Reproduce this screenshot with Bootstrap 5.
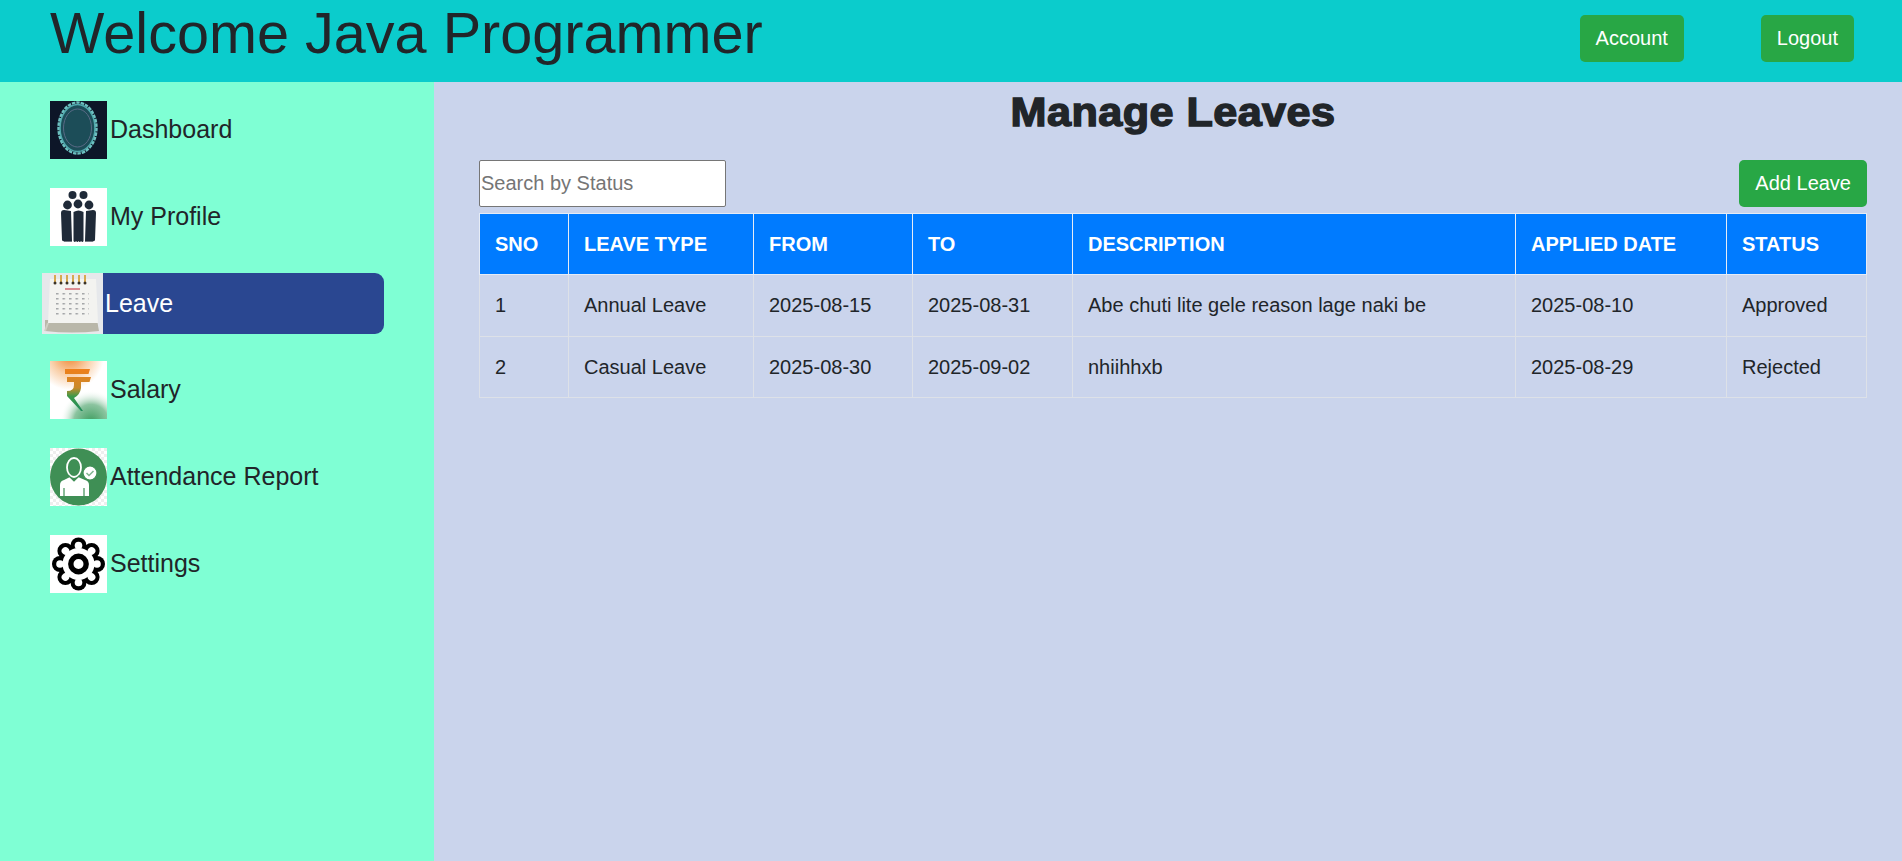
<!DOCTYPE html>
<html lang="en">

<head>
    <meta charset="UTF-8">
    <meta name="viewport" content="width=device-width, initial-scale=1.0">
    <title>Manage Leaves</title>
    <link href="https://cdn.jsdelivr.net/npm/bootstrap@5.3.3/dist/css/bootstrap.min.css" rel="stylesheet">
    <style>
        body {
            font-family: "Liberation Sans", Arial, sans-serif;
            color: #212529;
            background: #cad4ec;
        }

        .top-bar {
            height: 82px;
            background: #0bcccc;
            padding: 0 48px 0 50px;
        }

        .top-title {
            font-size: 57.6px;
            line-height: 67px;
            font-weight: 400;
            margin: 0;
            font-family: inherit;
        }

        .green-btn {
            background: #28a745;
            color: #fff;
            border: 0;
            font-size: 20px;
            line-height: 30px;
            padding: 8px 16px 9px;
            border-radius: 5px;
        }

        .green-btn:hover {
            background: #28a745;
            color: #fff;
        }

        .top-actions {
            gap: 77px;
            padding-top: 15px;
        }

        .page-body {
            flex: 1;
        }

        .side-bar {
            width: 434px;
            flex: none;
            background: #7fffd4;
            padding: 19px 50px 0;
            gap: 29px;
        }

        .side-link {
            display: flex;
            align-items: center;
            gap: 3px;
            height: 58px;
            font-size: 25px;
            color: #212529;
            text-decoration: none;
        }

        .side-link svg {
            width: 57px;
            height: 58px;
            flex: none;
        }

        .side-link.current {
            height: 61px;
            width: 342px;
            margin: -2px 0 -2px -8px;
            gap: 2px;
            background: #2a4791;
            color: #fff;
            border-radius: 0 9px 9px 0;
        }

        .side-link.current svg {
            width: 61px;
            height: 61px;
        }

        .main-area {
            flex: 1;
            min-width: 0;
            padding: 0 35px 0 45px;
        }

        .page-heading {
            font-family: "Liberation Sans", Arial, sans-serif;
            font-weight: 700;
            font-size: 40px;
            line-height: 48px;
            letter-spacing: .4px;
            margin: 0;
            padding: 6px 0 24px;
            text-align: center;
            -webkit-text-stroke: 1.4px #212529;
            transform: scaleX(1.08);
        }

        .tool-row {
            margin-bottom: 6px;
        }

        .status-search {
            width: 247px;
            height: 47px;
            padding: 1px 0 1px 1px;
            font-size: 20px;
            background: #fff;
            border: 1px solid #767676;
            border-radius: 2px;
            color: #212529;
            outline: 0;
        }

        .status-search::placeholder {
            color: #757575;
        }

        .leave-table {
            table-layout: fixed;
            width: 1388px;
            margin: 0;
            font-size: 20px;
            --bs-table-bg: transparent;
            --bs-table-color: #212529;
            border-collapse: collapse;
        }

        .leave-table th,
        .leave-table td {
            padding: 15px;
            line-height: 30px;
            border: 1px solid #dde1e8;
            background: transparent;
        }

        .leave-table tbody tr:first-child td {
            padding-bottom: 16px;
        }

        .leave-table th {
            background: #007bff;
            color: #fff;
            font-weight: 700;
            text-transform: uppercase;
            border-color: #e6ecf6;
        }

        .leave-table th:nth-child(1) { width: 89px; }
        .leave-table th:nth-child(2) { width: 185px; }
        .leave-table th:nth-child(3) { width: 159px; }
        .leave-table th:nth-child(4) { width: 160px; }
        .leave-table th:nth-child(5) { width: 443px; }
        .leave-table th:nth-child(6) { width: 211px; }
    </style>
</head>

<body class="d-flex flex-column vh-100 overflow-hidden">
    <header class="top-bar d-flex justify-content-between align-items-start">
        <h1 class="top-title">Welcome Java Programmer</h1>
        <div class="top-actions d-flex">
            <button class="btn green-btn">Account</button>
            <button class="btn green-btn">Logout</button>
        </div>
    </header>

    <div class="page-body d-flex">
        <nav class="side-bar d-flex flex-column">
            <a href="#" class="side-link">
                <svg viewBox="0 0 57 58">
                    <rect width="57" height="58" fill="#0d1628" />
                    <ellipse cx="27.5" cy="27" rx="17.5" ry="23.5" fill="#1c4d58" stroke="#4fa9ad" stroke-width="1.6" />
                    <ellipse cx="27.5" cy="27" rx="19" ry="25.5" fill="none" stroke="#6cc0c0" stroke-width="2.4" stroke-dasharray="3.5 1" />
                    <ellipse cx="27.5" cy="27" rx="14" ry="19" fill="none" stroke="#5a6a86" stroke-width="1" />
                </svg>
                Dashboard
            </a>
            <a href="#" class="side-link">
                <svg viewBox="0 0 57 58" fill="#1f2a38">
                    <rect width="57" height="58" fill="#fff" />
                    <circle cx="22.5" cy="7" r="4" />
                    <circle cx="33.5" cy="7" r="4" />
                    <path d="M11 25q0-3 3-3l7 1 1 30q-1 2-2 0q-1 2-2 0q-1 2-2 0q-1 2-2 0q-1 1-2-1z" />
                    <path d="M23.5 24q5-3 10 0v29q-1 2-2.500 0q-1 2-2.500 0q-1 2-2.500 0q-1 2-2.500 0z" />
                    <path d="M46 25q0-3-3-3l-7 1-1 30q1 2 2 0q1 2 2 0q1 2 2 0q1 2 2 0q1 1 2-1z" />
                    <circle cx="17.5" cy="17" r="4.4" />
                    <circle cx="28" cy="16" r="4.4" />
                    <circle cx="39" cy="17" r="4.4" />
                </svg>
                My Profile
            </a>
            <a href="#" class="side-link current">
                <svg viewBox="0 0 61 61">
                    <defs>
                        <pattern id="calDays" width="6.500" height="5" patternUnits="userSpaceOnUse" patternTransform="translate(14 20)">
                            <rect width="2.500" height="1.500" fill="#a4a6a8" />
                        </pattern>
                    </defs>
                    <rect width="61" height="61" fill="#e6e8eb" />
                    <path d="M3 47h52l2 11q-27 3-54 0z" fill="#b9b7a9" />
                    <path d="M8 6h46l2 44H6z" fill="#f3f3f0" />
                    <path d="M6 50l-3 8" stroke="#d0cfc4" stroke-width="2" />
                    <rect x="23" y="15" width="15" height="2" fill="#d0606a" opacity=".7" />
                    <rect x="14" y="20" width="33" height="24" fill="url(#calDays)" />
                    <path d="M13 2v8M19 2v8M25 2v8M31 2v8M37 2v8M43 2v8" stroke="#d6a951" stroke-width="2" />
                    <g fill="#3a3226">
                        <circle cx="13" cy="10" r="1.500" /><circle cx="19" cy="10" r="1.500" /><circle cx="25" cy="10" r="1.500" />
                        <circle cx="31" cy="10" r="1.500" /><circle cx="37" cy="10" r="1.500" /><circle cx="43" cy="10" r="1.500" />
                    </g>
                </svg>
                Leave
            </a>
            <a href="#" class="side-link">
                <svg viewBox="0 0 57 58">
                    <defs>
                        <radialGradient id="saffron" cx=".35" cy="-.1" r=".6">
                            <stop offset="0" stop-color="#ef8430" />
                            <stop offset=".55" stop-color="#f9cfa8" />
                            <stop offset="1" stop-color="#fff" />
                        </radialGradient>
                        <radialGradient id="leafGreen" cx=".72" cy="1.05" r=".55">
                            <stop offset="0" stop-color="#3f9d60" />
                            <stop offset=".55" stop-color="#8cc4a0" />
                            <stop offset="1" stop-color="#fff" stop-opacity="0" />
                        </radialGradient>
                        <linearGradient id="rupeeFill" x1="0" y1="0" x2="0" y2="1">
                            <stop offset="0" stop-color="#ef7f1a" />
                            <stop offset=".45" stop-color="#c98a2a" />
                            <stop offset=".65" stop-color="#3d9a4a" />
                            <stop offset="1" stop-color="#1f8a5a" />
                        </linearGradient>
                    </defs>
                    <rect width="57" height="58" fill="url(#saffron)" />
                    <rect width="57" height="58" fill="url(#leafGreen)" />
                    <path fill="url(#rupeeFill)" d="M15 8H40L38.500 13H15ZM17 16H41L39.500 21H31V27Q30 34 24 37L33 50H31L17 35V30Q24 30 24 24V21H17Z" />
                </svg>
                Salary
            </a>
            <a href="#" class="side-link">
                <svg viewBox="0 0 57 58">
                    <defs>
                        <pattern id="checkBg" width="6" height="6" patternUnits="userSpaceOnUse">
                            <rect width="6" height="6" fill="#fff" />
                            <rect width="3" height="3" fill="#eee" />
                            <rect x="3" y="3" width="3" height="3" fill="#eee" />
                        </pattern>
                    </defs>
                    <rect width="57" height="58" fill="url(#checkBg)" />
                    <circle cx="28.500" cy="29" r="28.500" fill="#3f8f55" />
                    <path fill="#fff" d="M10 48V37q0-4 4-5l6-3 4 4 4-4 7 3q4 1 4 5v11z" />
                    <ellipse cx="24" cy="19.500" rx="7" ry="9.500" fill="#3f8f55" stroke="#fff" stroke-width="1.800" />
                    <path d="M18 27l6 6 6-6M14 40v8M34 40v8" fill="none" stroke="#3f8f55" stroke-width="1.200" />
                    <circle cx="40" cy="25" r="7" fill="#fff" stroke="#3f8f55" stroke-width="1.200" />
                    <path d="M36.500 25l2.500 2.500 4.500-4.500" fill="none" stroke="#7fb58f" stroke-width="1.500" />
                </svg>
                Attendance Report
            </a>
            <a href="#" class="side-link">
                <svg viewBox="0 0 57 58">
                    <rect width="57" height="58" fill="#fff" />
                    <g fill="#000">
                        <circle cx="28.500" cy="10.500" r="8" />
                        <circle cx="28.500" cy="10.500" r="8" transform="rotate(45 28.500 29)" />
                        <circle cx="28.500" cy="10.500" r="8" transform="rotate(90 28.500 29)" />
                        <circle cx="28.500" cy="10.500" r="8" transform="rotate(135 28.500 29)" />
                        <circle cx="28.500" cy="10.500" r="8" transform="rotate(180 28.500 29)" />
                        <circle cx="28.500" cy="10.500" r="8" transform="rotate(225 28.500 29)" />
                        <circle cx="28.500" cy="10.500" r="8" transform="rotate(270 28.500 29)" />
                        <circle cx="28.500" cy="10.500" r="8" transform="rotate(315 28.500 29)" />
                        <circle cx="28.500" cy="29" r="20" />
                    </g>
                    <g fill="#fff">
                        <circle cx="28.500" cy="10.500" r="3.800" />
                        <circle cx="28.500" cy="10.500" r="3.800" transform="rotate(45 28.500 29)" />
                        <circle cx="28.500" cy="10.500" r="3.800" transform="rotate(90 28.500 29)" />
                        <circle cx="28.500" cy="10.500" r="3.800" transform="rotate(135 28.500 29)" />
                        <circle cx="28.500" cy="10.500" r="3.800" transform="rotate(180 28.500 29)" />
                        <circle cx="28.500" cy="10.500" r="3.800" transform="rotate(225 28.500 29)" />
                        <circle cx="28.500" cy="10.500" r="3.800" transform="rotate(270 28.500 29)" />
                        <circle cx="28.500" cy="10.500" r="3.800" transform="rotate(315 28.500 29)" />
                        <circle cx="28.500" cy="29" r="16" />
                    </g>
                    <circle cx="28.500" cy="29" r="7.700" fill="none" stroke="#000" stroke-width="5.400" />
                </svg>
                Settings
            </a>
        </nav>

        <main class="main-area">
            <h2 class="page-heading">Manage Leaves</h2>
            <div class="tool-row d-flex justify-content-between">
                <input type="text" class="status-search" placeholder="Search by Status">
                <button class="btn green-btn">Add Leave</button>
            </div>
            <table class="table leave-table">
                <thead>
                    <tr>
                        <th>Sno</th>
                        <th>Leave Type</th>
                        <th>From</th>
                        <th>To</th>
                        <th>Description</th>
                        <th>Applied Date</th>
                        <th>Status</th>
                    </tr>
                </thead>
                <tbody>
                    <tr>
                        <td>1</td>
                        <td>Annual Leave</td>
                        <td>2025-08-15</td>
                        <td>2025-08-31</td>
                        <td>Abe chuti lite gele reason lage naki be</td>
                        <td>2025-08-10</td>
                        <td>Approved</td>
                    </tr>
                    <tr>
                        <td>2</td>
                        <td>Casual Leave</td>
                        <td>2025-08-30</td>
                        <td>2025-09-02</td>
                        <td>nhiihhxb</td>
                        <td>2025-08-29</td>
                        <td>Rejected</td>
                    </tr>
                </tbody>
            </table>
        </main>
    </div>

    <script src="https://cdn.jsdelivr.net/npm/bootstrap@5.3.3/dist/js/bootstrap.bundle.min.js"></script>
</body>

</html>
